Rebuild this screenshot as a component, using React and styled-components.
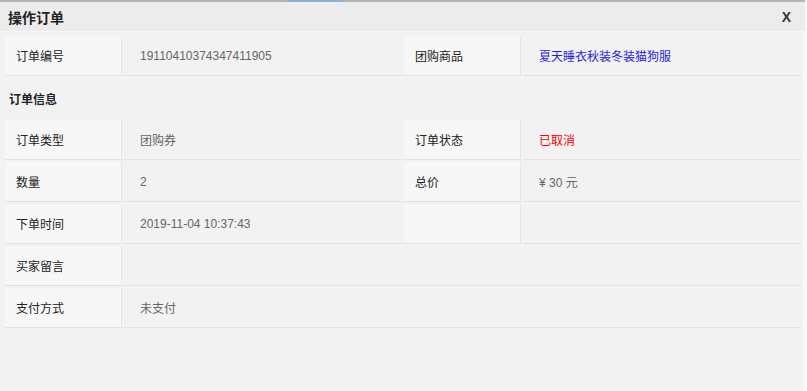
import styled, { createGlobalStyle } from "styled-components";

const GlobalStyle = createGlobalStyle`
  html, body {
    margin: 0;
    padding: 0;
    background: #fafafa;
  }
  * {
    box-sizing: border-box;
  }
`;

const Panel = styled.div`
  width: 805px;
  height: 391px;
  background: linear-gradient(to right, #f2f2f2 0, #f2f2f2 803px, #f7f7f7 803px);
  font-family: "Liberation Sans", "Noto Sans CJK SC", sans-serif;
  font-size: 12px;
  overflow: hidden;
`;

const TopLine = styled.div`
  height: 2px;
  background: linear-gradient(
    to right,
    #b4b4b4 0,
    #b4b4b4 287px,
    #8fb0cc 287px,
    #8fb0cc 343px,
    #b4b4b4 343px
  );
`;

const Header = styled.div`
  display: flex;
  align-items: center;
  justify-content: space-between;
  height: 30px;
  padding: 0 14px 0 8px;
  background: #ececec;
  border-bottom: 1px solid #f6f6f6;
  color: #222;
  font-size: 14px;
  font-weight: bold;
`;

const Close = styled.span`
  font-family: "Liberation Sans", sans-serif;
  font-size: 14px;
  font-weight: bold;
  color: #333;
  cursor: pointer;
`;

const Body = styled.div`
  padding: 4px 4px 0 5px;
  display: flex;
  flex-direction: column;
  gap: 2px;
`;

const Row = styled.div`
  display: grid;
  grid-template-columns: 117px 278px 117px 1fr;
  column-gap: 2px;
  height: 40px;
`;

const Cell = styled.div`
  display: flex;
  align-items: center;
  border-bottom: 1px solid #e2e2e2;
  white-space: nowrap;
  grid-column: ${(p) => (p.$wide ? "2 / 5" : "auto")};
`;

const Label = styled(Cell)`
  background: #f7f7f7;
  color: #222;
  padding-left: 11px;
  border-right: 1px solid #e6e6e6;
`;

const Value = styled(Cell)`
  background: #f2f2f2;
  color: ${(p) => p.$color || "#666"};
  padding-left: 16px;
`;

const Section = styled.div`
  display: flex;
  align-items: center;
  height: 40px;
  padding-left: 4px;
  color: #222;
  font-size: 12px;
  font-weight: bold;
`;

const App = () => {
  return (
    <>
      <GlobalStyle />
      <Panel>
        <TopLine />
        <Header>
          <span>操作订单</span>
          <Close>X</Close>
        </Header>
        <Body>
          <Row>
            <Label>订单编号</Label>
            <Value>19110410374347411905</Value>
            <Label>团购商品</Label>
            <Value $color="#1f1fe0">夏天睡衣秋装冬装猫狗服</Value>
          </Row>
          <Section>订单信息</Section>
          <Row>
            <Label>订单类型</Label>
            <Value>团购券</Value>
            <Label>订单状态</Label>
            <Value $color="#ff0000">已取消</Value>
          </Row>
          <Row>
            <Label>数量</Label>
            <Value>2</Value>
            <Label>总价</Label>
            <Value>¥ 30 元</Value>
          </Row>
          <Row>
            <Label>下单时间</Label>
            <Value>2019-11-04 10:37:43</Value>
            <Label />
            <Value />
          </Row>
          <Row>
            <Label>买家留言</Label>
            <Value $wide />
          </Row>
          <Row>
            <Label>支付方式</Label>
            <Value $wide>未支付</Value>
          </Row>
        </Body>
      </Panel>
    </>
  );
};

export default App;
